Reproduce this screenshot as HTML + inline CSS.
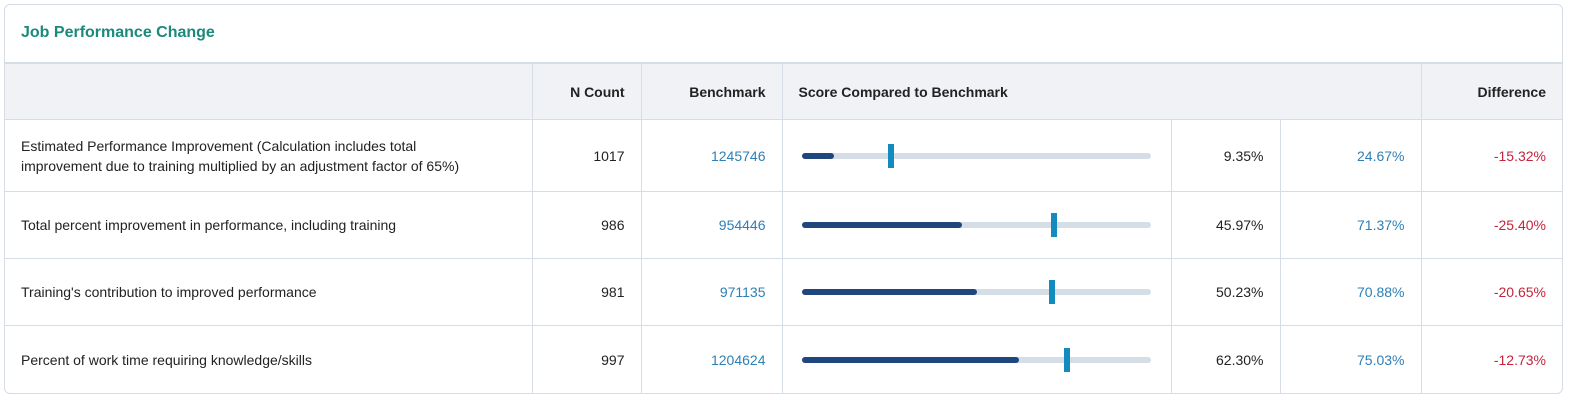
<!DOCTYPE html><html><head><style>
body{margin:0;background:#fff;font-family:"Liberation Sans",sans-serif;font-size:14px;color:#222}
.card{position:absolute;left:4px;top:4px;width:1557px;height:388px;border:1px solid #d6dde6;border-radius:6px;overflow:hidden}
.title{height:57px;line-height:56px;padding-left:16px;color:#1b8a7a;font-weight:bold;font-size:16px;border-bottom:1px solid #d6dde6}
table{border-collapse:collapse;width:100%;table-layout:fixed}
td,th{border:1px solid #d6dde6;padding:0 16px;font-size:14px}
tr>*:first-child{border-left:none}tr>*:last-child{border-right:none}
th{background:#f0f2f6;height:55px;font-weight:bold;text-align:right;color:#222}
td{text-align:right}
td.l,th.l{text-align:left}
.b{color:#2e7fb5}.r{color:#c4243d}
.track{position:relative;height:6px;background:#d5dde6;border-radius:3px;width:349px}
.fill{position:absolute;left:0;top:0;height:6px;background:#1f477d;border-radius:3px}
.mk{position:absolute;top:-9px;width:6px;height:24px;background:#138bbf}
</style></head><body><div class="card">
<div class="title">Job Performance Change</div>
<table>
<colgroup><col style="width:527px"><col style="width:109px"><col style="width:141px"><col style="width:389px"><col style="width:109px"><col style="width:141px"><col></colgroup>
<tr><th></th><th>N Count</th><th>Benchmark</th><th class="l" colspan="3">Score Compared to Benchmark</th><th>Difference</th></tr>
<tr style="height:72px"><td class="l" style="line-height:20px">Estimated Performance Improvement (Calculation includes total<br>improvement due to training multiplied by an adjustment factor of 65%)</td><td>1017</td><td class="b">1245746</td><td class="l" style="padding-left:19px"><div class="track"><div class="fill" style="width:32px"></div><div class="mk" style="left:86px"></div></div></td><td>9.35%</td><td class="b">24.67%</td><td class="r">-15.32%</td></tr>
<tr style="height:67px"><td class="l">Total percent improvement in performance, including training</td><td>986</td><td class="b">954446</td><td class="l" style="padding-left:19px"><div class="track"><div class="fill" style="width:160px"></div><div class="mk" style="left:249px"></div></div></td><td>45.97%</td><td class="b">71.37%</td><td class="r">-25.40%</td></tr>
<tr style="height:67px"><td class="l">Training's contribution to improved performance</td><td>981</td><td class="b">971135</td><td class="l" style="padding-left:19px"><div class="track"><div class="fill" style="width:175px"></div><div class="mk" style="left:247px"></div></div></td><td>50.23%</td><td class="b">70.88%</td><td class="r">-20.65%</td></tr>
<tr style="height:68px"><td class="l">Percent of work time requiring knowledge/skills</td><td>997</td><td class="b">1204624</td><td class="l" style="padding-left:19px"><div class="track"><div class="fill" style="width:217px"></div><div class="mk" style="left:262px"></div></div></td><td>62.30%</td><td class="b">75.03%</td><td class="r">-12.73%</td></tr>
</table></div></body></html>
